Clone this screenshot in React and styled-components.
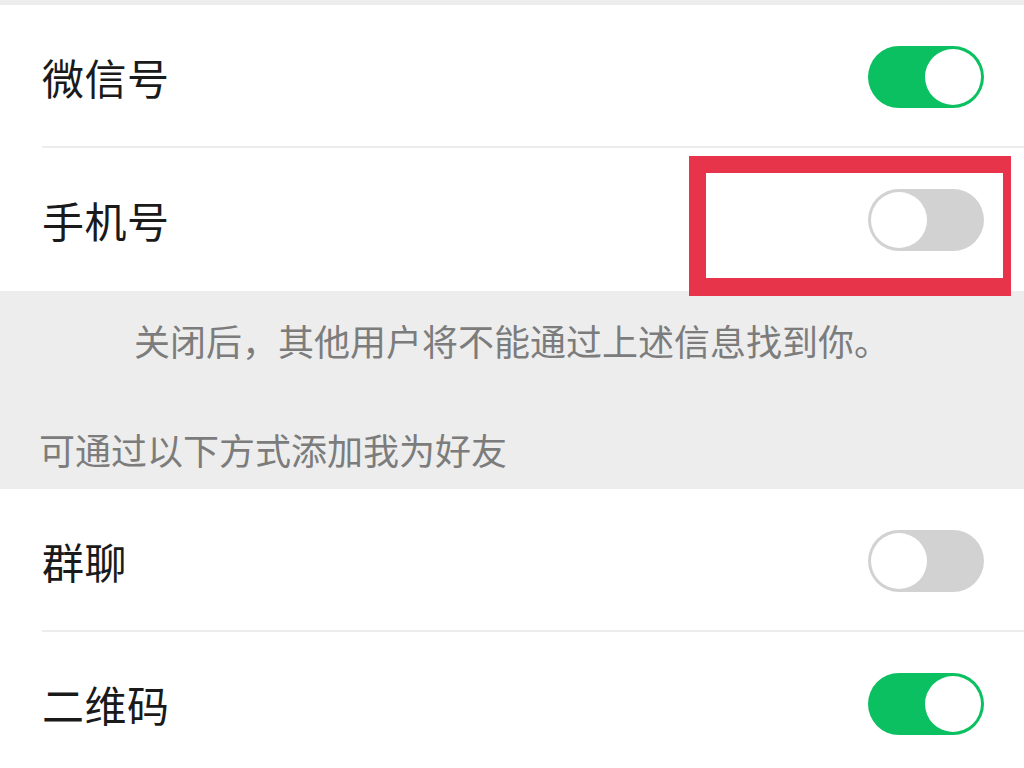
import React, { useState } from "react";
import styled, { createGlobalStyle } from "styled-components";

const GlobalStyle = createGlobalStyle`
  body {
    margin: 0;
    background: #ffffff;
    font-family: "Noto Sans CJK SC", "Noto Sans", sans-serif;
  }
  #root { width: 1024px; height: 768px; overflow: hidden; }
`;

const Page = styled.div`
  width: 1024px;
  height: 768px;
  overflow: hidden;
  background: #ffffff;
  border-top: 5px solid #ededed;
  box-sizing: border-box;
`;

const Row = styled.div`
  position: relative;
  height: 143px;
  display: flex;
  align-items: center;
  justify-content: space-between;
  padding: 0 40px 0 42px;
  background: #ffffff;
  &::after {
    content: "";
    display: ${({ divider }) => (divider ? "block" : "none")};
    position: absolute;
    left: 42px;
    right: 0;
    bottom: 0;
    height: 2px;
    background: #ececec;
  }
`;

const Label = styled.span`
  font-size: 42px;
  color: #1a1a1a;
  letter-spacing: 0.5px;
  line-height: 1;
`;

const Track = styled.button`
  position: relative;
  width: 116px;
  height: 62px;
  border: none;
  padding: 0;
  border-radius: 31px;
  cursor: pointer;
  background: ${({ on }) => (on ? "#0ac060" : "#d2d2d2")};
  transition: background 0.2s;
`;

const Knob = styled.span`
  position: absolute;
  top: 3px;
  left: ${({ on }) => (on ? "57px" : "3px")};
  width: 56px;
  height: 56px;
  border-radius: 50%;
  background: #ffffff;
  transition: left 0.2s;
`;

const Highlight = styled.div`
  position: absolute;
  left: 689px;
  top: 8px;
  width: 322px;
  height: 140px;
  box-sizing: border-box;
  border: 17px solid #e8344a;
  border-right-width: 8px;
  border-bottom-width: 18px;
  pointer-events: none;
`;

const Section = styled.div`
  height: 198px;
  background: #ededed;
  box-sizing: border-box;
  padding-top: 24px;
`;

const Notice = styled.p`
  margin: 0;
  text-align: center;
  font-size: 36px;
  line-height: 50px;
  color: #7c7c7c;
`;

const Caption = styled.p`
  margin: 59px 0 0;
  padding-left: 39px;
  font-size: 36px;
  line-height: 50px;
  color: #7c7c7c;
`;

const Toggle = ({ value, onChange }) => (
  <Track on={value ? 1 : 0} onClick={() => onChange(!value)}>
    <Knob on={value ? 1 : 0} />
  </Track>
);

export default function App() {
  const [wechat, setWechat] = useState(true);
  const [phone, setPhone] = useState(false);
  const [group, setGroup] = useState(false);
  const [qr, setQr] = useState(true);

  return (
    <Page>
      <GlobalStyle />
      <Row divider>
        <Label>微信号</Label>
        <Toggle value={wechat} onChange={setWechat} />
      </Row>
      <Row>
        <Label>手机号</Label>
        <Toggle value={phone} onChange={setPhone} />
        <Highlight />
      </Row>
      <Section>
        <Notice>关闭后，其他用户将不能通过上述信息找到你。</Notice>
        <Caption>可通过以下方式添加我为好友</Caption>
      </Section>
      <Row divider>
        <Label>群聊</Label>
        <Toggle value={group} onChange={setGroup} />
      </Row>
      <Row>
        <Label>二维码</Label>
        <Toggle value={qr} onChange={setQr} />
      </Row>
    </Page>
  );
}
